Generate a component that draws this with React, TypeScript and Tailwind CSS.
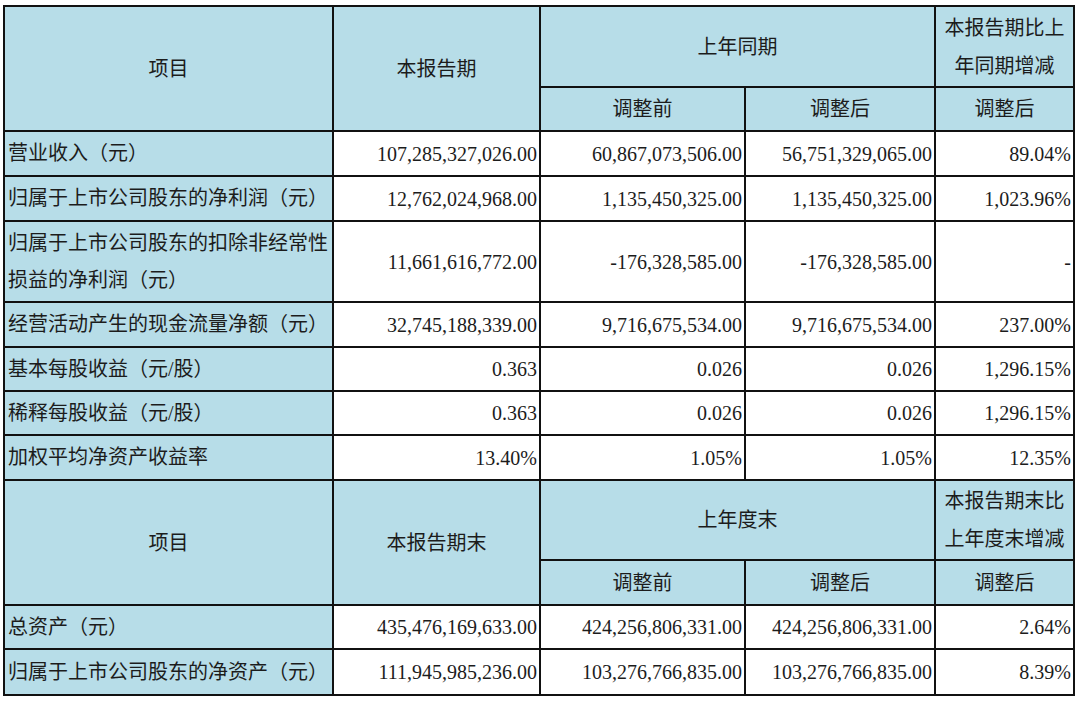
import React from 'react';

type Row = {
  label: React.ReactNode;
  values: string[];
  h: string;
};

const periodRows: Row[] = [
  { label: '营业收入（元）', values: ['107,285,327,026.00', '60,867,073,506.00', '56,751,329,065.00', '89.04%'], h: 'h-[45px]' },
  { label: '归属于上市公司股东的净利润（元）', values: ['12,762,024,968.00', '1,135,450,325.00', '1,135,450,325.00', '1,023.96%'], h: 'h-[45px]' },
  {
    label: (
      <>
        归属于上市公司股东的扣除非经常性
        <br />
        损益的净利润（元）
      </>
    ),
    values: ['11,661,616,772.00', '-176,328,585.00', '-176,328,585.00', '-'],
    h: 'h-[81px]',
  },
  { label: '经营活动产生的现金流量净额（元）', values: ['32,745,188,339.00', '9,716,675,534.00', '9,716,675,534.00', '237.00%'], h: 'h-[45px]' },
  { label: '基本每股收益（元/股）', values: ['0.363', '0.026', '0.026', '1,296.15%'], h: 'h-[44px]' },
  { label: '稀释每股收益（元/股）', values: ['0.363', '0.026', '0.026', '1,296.15%'], h: 'h-[44px]' },
  { label: '加权平均净资产收益率', values: ['13.40%', '1.05%', '1.05%', '12.35%'], h: 'h-[45px]' },
];

const yearEndRows: Row[] = [
  { label: '总资产（元）', values: ['435,476,169,633.00', '424,256,806,331.00', '424,256,806,331.00', '2.64%'], h: 'h-[44px]' },
  { label: '归属于上市公司股东的净资产（元）', values: ['111,945,985,236.00', '103,276,766,835.00', '103,276,766,835.00', '8.39%'], h: 'h-[46px]' },
];

const cell = 'border-2 border-[#111] p-0';
const head = `${cell} bg-[#b7dde8] text-center`;

const HeaderRows: React.FC<{ current: string; previous: string; change: [string, string]; top: string; bottom: string }> = ({
  current,
  previous,
  change,
  top,
  bottom,
}) => (
  <>
    <tr className={top}>
      <td rowSpan={2} className={head}>项目</td>
      <td rowSpan={2} className={head}>{current}</td>
      <td colSpan={2} className={head}>{previous}</td>
      <td className={`${head} leading-[38px]`}>
        {change[0]}
        <br />
        {change[1]}
      </td>
    </tr>
    <tr className={bottom}>
      <td className={head}>调整前</td>
      <td className={head}>调整后</td>
      <td className={head}>调整后</td>
    </tr>
  </>
);

const DataRow: React.FC<{ row: Row }> = ({ row }) => (
  <tr className={row.h}>
    <td className={`${cell} bg-[#b7dde8] pl-[3px] text-left leading-[37px] whitespace-nowrap`}>{row.label}</td>
    {row.values.map((v, i) => (
      <td key={i} className={`${cell} bg-white pr-[2px] text-right whitespace-nowrap`}>
        {v}
      </td>
    ))}
  </tr>
);

const App: React.FC = () => {
  return (
    <div className="w-[1080px] h-[702px] bg-white pt-[5px] pl-[3px] overflow-hidden">
      <table
        className="border-collapse table-fixed w-[1072px] text-[20px] text-[#1c1c1c]"
        style={{ fontFamily: '"Liberation Serif", "Noto Sans CJK SC", serif' }}
      >
        <colgroup>
          <col className="w-[329px]" />
          <col className="w-[207px]" />
          <col className="w-[205px]" />
          <col className="w-[190px]" />
          <col className="w-[139px]" />
        </colgroup>
        <tbody>
          <HeaderRows current="本报告期" previous="上年同期" change={['本报告期比上', '年同期增减']} top="h-[81px]" bottom="h-[44px]" />
          {periodRows.map((r, i) => (
            <DataRow key={i} row={r} />
          ))}
          <HeaderRows current="本报告期末" previous="上年度末" change={['本报告期末比', '上年度末增减']} top="h-[80px]" bottom="h-[45px]" />
          {yearEndRows.map((r, i) => (
            <DataRow key={i} row={r} />
          ))}
        </tbody>
      </table>
    </div>
  );
};

export default App;
